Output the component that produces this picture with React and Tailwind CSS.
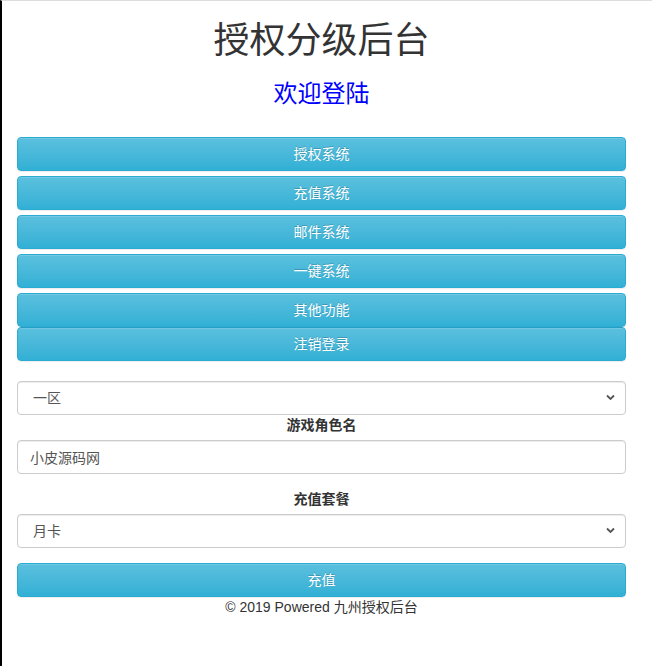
import React from 'react'

const MENU = ['授权系统', '充值系统', '邮件系统', '一键系统', '其他功能']

const InfoButton = ({ children, className = '' }) => (
  <button
    type="button"
    className={`block w-full h-[34px] rounded-[4px] border border-[#2aabd2] bg-gradient-to-b from-[#5bc0de] to-[#31b0d5] text-white text-[14px] leading-[20px] [text-shadow:0_-1px_0_rgba(0,0,0,0.2)] shadow-[inset_0_1px_0_rgba(255,255,255,0.15),0_1px_1px_rgba(0,0,0,0.075)] ${className}`}
  >
    {children}
  </button>
)

const Select = ({ value, options }) => (
  <div className="relative h-[34px]">
    <select
      defaultValue={value}
      className="block w-full h-[34px] appearance-none rounded-[4px] border border-[#ccc] bg-white pl-[15px] pr-8 text-[14px] text-[#555] shadow-[inset_0_1px_1px_rgba(0,0,0,0.075)] outline-none"
    >
      {options.map(o => (
        <option key={o}>{o}</option>
      ))}
    </select>
    <svg
      className="pointer-events-none absolute right-[11px] top-[13px]"
      width="9"
      height="7"
      viewBox="0 0 9 7"
    >
      <path d="M1 1.5 L4.5 5 L8 1.5" fill="none" stroke="#555" strokeWidth="1.8" />
    </svg>
  </div>
)

export default function App() {
  return (
    <div className="min-h-[666px] border-l-2 border-t border-l-black border-t-[#ddd] bg-white font-['Liberation_Sans','Noto_Sans_CJK_SC',sans-serif] text-[14px] text-[#333]">
      <div className="ml-[15px] w-[609px]">
        <h1 className="mt-[20px] h-[40px] text-center text-[36px] leading-[40px] font-normal text-[#333]">
          授权分级后台
        </h1>
        <h2 className="mt-[20px] h-[26px] text-center text-[24px] leading-[26px] font-normal text-[#0000ff]">
          欢迎登陆
        </h2>

        <div className="mt-[30px] flex flex-col gap-[5px]">
          {MENU.map(m => (
            <InfoButton key={m}>{m}</InfoButton>
          ))}
        </div>
        <InfoButton>注销登录</InfoButton>

        <div className="mt-[20px]">
          <Select value="一区" options={['一区', '二区', '三区']} />
        </div>

        <div className="h-[20px] text-center font-bold leading-[20px]">游戏角色名</div>
        <input
          type="text"
          defaultValue="小皮源码网"
          className="mt-[5px] block w-full h-[34px] rounded-[4px] border border-[#ccc] bg-white px-[12px] text-[14px] text-[#555] shadow-[inset_0_1px_1px_rgba(0,0,0,0.075)] outline-none"
        />

        <div className="mt-[15px] h-[20px] text-center font-bold leading-[20px]">充值套餐</div>
        <div className="mt-[5px]">
          <Select value="月卡" options={['月卡', '季卡', '年卡']} />
        </div>

        <InfoButton className="mt-[15px]">充值</InfoButton>
        <p className="h-[20px] text-center leading-[20px]">© 2019 Powered 九州授权后台</p>
      </div>
    </div>
  )
}
